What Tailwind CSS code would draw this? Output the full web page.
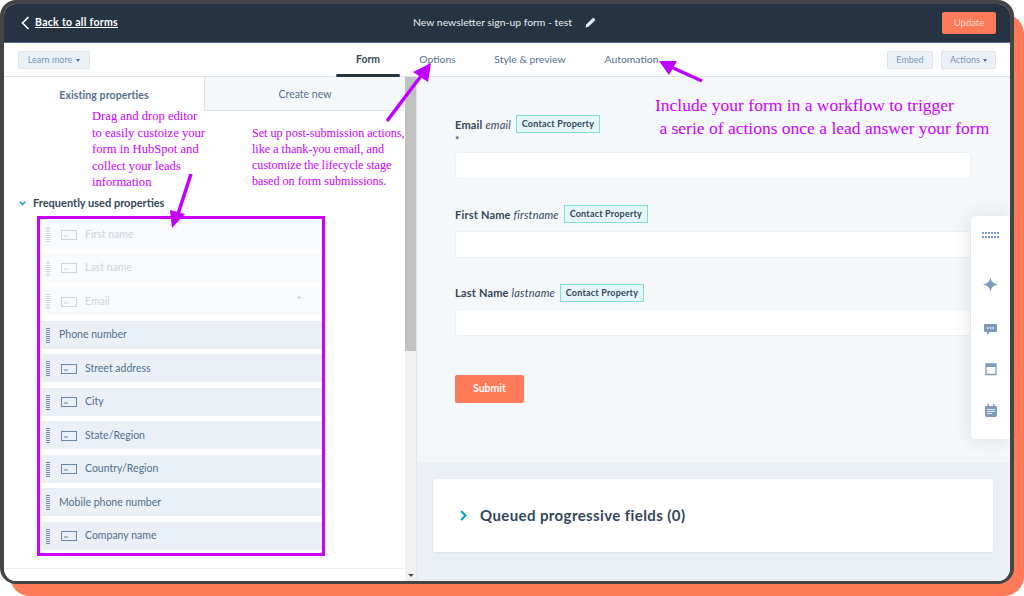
<!DOCTYPE html>
<html>
<head>
<meta charset="utf-8">
<script src="https://cdn.jsdelivr.net/npm/@tailwindcss/browser@4"></script>
</head>
<body class="bg-white">
<div class="relative w-[1024px] h-[596px] overflow-hidden bg-white font-['Lato','Noto_Sans',sans-serif] text-[#33475b]">
  <div class="absolute left-[10px] top-[14px] right-0 bottom-0 rounded-[20px] bg-[#ff7a59]"></div>
  <div class="relative w-[1014px] h-[584px] border-4 border-b-[3px] border-[#444444] rounded-[16px] overflow-hidden flex flex-col bg-white">
    <header class="h-[39px] shrink-0 bg-[#253342] flex items-center justify-between text-white pl-[17px] pr-[14px] border-b border-[#516f90]">
      <div class="flex items-center gap-[5px] w-[330px]">
        <svg width="9" height="14" viewBox="0 0 9 14" fill="none" stroke="#fff" stroke-width="1.6"><path d="M7.5 1 1.5 7l6 6"/></svg>
        <a class="text-[10.5px] font-bold underline tracking-[0.3px]">Back to all forms</a>
      </div>
      <div class="flex items-center gap-[13px] text-[10.4px] mr-[8px] text-[#e8edf2]">
        <span>New newsletter sign-up form - test</span>
        <svg width="11" height="11" viewBox="0 0 11 11" fill="#e8edf2"><path d="M0.5 10.5 1.2 7.6 7.6 1.2a1 1 0 0 1 1.4 0l1 1a1 1 0 0 1 0 1.4L3.4 9.8z"/></svg>
      </div>
      <div class="w-[330px] flex justify-end">
        <button class="w-[54px] h-[22px] bg-[#ff7a59] rounded-[2px] text-[9.5px] text-[#ffdcd0]">Update</button>
      </div>
    </header>
    <nav class="h-[34px] shrink-0 bg-white border-b border-[#dfe3eb] flex items-center justify-between px-[14px] relative">
      <button class="h-[18px] w-[72px] pt-[1px] bg-[#eaf0f6] border border-[#dfe3eb] rounded-[2px] text-[9px] text-[#7c98b6] flex items-center justify-center gap-[4px]">Learn more <span class="w-0 h-0 border-x-[2.5px] border-x-transparent border-t-[3px] border-t-[#516f90]"></span></button>
      <div class="absolute left-[332px] top-0 h-full pt-[1px] flex text-[10.4px] text-[#516f90]">
        <div class="w-[64px] flex items-center justify-center font-bold text-[#33475b] relative">Form<span class="absolute left-0 right-0 bottom-[-1px] h-[3px] rounded-[2px] bg-[#253342]"></span></div>
        <div class="w-[75px] flex items-center justify-center">Options</div>
        <div class="w-[110px] flex items-center justify-center">Style &amp; preview</div>
        <div class="w-[90px] flex items-center justify-center pl-[3px]">Automation</div>
      </div>
      <div class="flex gap-[8px]">
        <button class="h-[18px] w-[46px] pt-[1px] bg-[#eaf0f6] border border-[#dfe3eb] rounded-[2px] text-[9px] text-[#7c98b6]">Embed</button>
        <button class="h-[18px] w-[55px] pt-[1px] bg-[#eaf0f6] border border-[#dfe3eb] rounded-[2px] text-[9px] text-[#7c98b6] flex items-center justify-center gap-[3px]">Actions <span class="w-0 h-0 border-x-[2.5px] border-x-transparent border-t-[3px] border-t-[#516f90]"></span></button>
      </div>
    </nav>
    <div class="flex-1 flex min-h-0">
      <aside class="w-[401px] shrink-0 bg-white flex flex-col">
        <div class="flex h-[34px] text-[10.5px] shrink-0">
          <div class="w-[200px] pt-[3px] flex items-center justify-center font-bold tracking-[0.1px] text-[#516f90]">Existing properties</div>
          <div class="w-[201px] pt-[3px] flex items-center justify-center bg-[#f5f8fa] border-b border-l border-[#dfe3eb] text-[#516f90]">Create new</div>
        </div>
        <div class="mt-[84px] ml-[15px] flex items-center gap-[7px] text-[11px] font-bold text-[#33475b] h-[16px]">
          <svg width="7" height="5" viewBox="0 0 7 5" fill="none" stroke="#00a4bd" stroke-width="1.4"><path d="M.7.8 3.5 3.6 6.3.8"/></svg>
          <span>Frequently used properties</span>
        </div>
        <ul class="ml-[33px] mt-[5px] w-[288px] h-[340px] border-[3px] border-[#cc00ff] pt-[1px] flex flex-col gap-[5.5px]">
          <li class="h-[28px] pt-[1px] bg-[#f5f8fa]/70 flex items-center pl-[6px] text-[10.5px] text-[#cbd6e2]"><span class="w-[4px] h-[15px] mr-[11px] bg-[repeating-linear-gradient(to_bottom,#cbd6e2_0,#cbd6e2_1px,transparent_1px,transparent_2px)]"></span><svg class="mr-[8px]" width="16" height="10" viewBox="0 0 16 10" fill="none" stroke="#cbd6e2"><rect x=".5" y=".5" width="15" height="9"/><path d="M3 6h4"/></svg>First name</li>
          <li class="h-[28px] pt-[1px] bg-[#f5f8fa]/70 flex items-center pl-[6px] text-[10.5px] text-[#cbd6e2]"><span class="w-[4px] h-[15px] mr-[11px] bg-[repeating-linear-gradient(to_bottom,#cbd6e2_0,#cbd6e2_1px,transparent_1px,transparent_2px)]"></span><svg class="mr-[8px]" width="16" height="10" viewBox="0 0 16 10" fill="none" stroke="#cbd6e2"><rect x=".5" y=".5" width="15" height="9"/><path d="M3 6h4"/></svg>Last name</li>
          <li class="h-[28px] pt-[1px] bg-[#f5f8fa]/70 flex items-center pl-[6px] text-[10.5px] text-[#cbd6e2] relative"><span class="w-[4px] h-[15px] mr-[11px] bg-[repeating-linear-gradient(to_bottom,#cbd6e2_0,#cbd6e2_1px,transparent_1px,transparent_2px)]"></span><svg class="mr-[8px]" width="16" height="10" viewBox="0 0 16 10" fill="none" stroke="#cbd6e2"><rect x=".5" y=".5" width="15" height="9"/><path d="M3 6h4"/></svg>Email<span class="absolute right-[21px] top-[6px] text-[9px] text-[#99acc2]">*</span></li>
          <li class="h-[28px] pt-[1px] bg-[#eaf0f6] flex items-center pl-[6px] text-[10.5px] text-[#516f90]"><span class="w-[4px] h-[15px] mr-[9px] bg-[repeating-linear-gradient(to_bottom,#6b87a5_0,#6b87a5_1px,transparent_1px,transparent_2px)]"></span>Phone number</li>
          <li class="h-[28px] pt-[1px] bg-[#eaf0f6] flex items-center pl-[6px] text-[10.5px] text-[#516f90]"><span class="w-[4px] h-[15px] mr-[11px] bg-[repeating-linear-gradient(to_bottom,#6b87a5_0,#6b87a5_1px,transparent_1px,transparent_2px)]"></span><svg class="mr-[8px]" width="16" height="10" viewBox="0 0 16 10" fill="none" stroke="#6b87a5"><rect x=".5" y=".5" width="15" height="9"/><path d="M3 6h4"/></svg>Street address</li>
          <li class="h-[28px] pt-[1px] bg-[#eaf0f6] flex items-center pl-[6px] text-[10.5px] text-[#516f90]"><span class="w-[4px] h-[15px] mr-[11px] bg-[repeating-linear-gradient(to_bottom,#6b87a5_0,#6b87a5_1px,transparent_1px,transparent_2px)]"></span><svg class="mr-[8px]" width="16" height="10" viewBox="0 0 16 10" fill="none" stroke="#6b87a5"><rect x=".5" y=".5" width="15" height="9"/><path d="M3 6h4"/></svg>City</li>
          <li class="h-[28px] pt-[1px] bg-[#eaf0f6] flex items-center pl-[6px] text-[10.5px] text-[#516f90]"><span class="w-[4px] h-[15px] mr-[11px] bg-[repeating-linear-gradient(to_bottom,#6b87a5_0,#6b87a5_1px,transparent_1px,transparent_2px)]"></span><svg class="mr-[8px]" width="16" height="10" viewBox="0 0 16 10" fill="none" stroke="#6b87a5"><rect x=".5" y=".5" width="15" height="9"/><path d="M3 6h4"/></svg>State/Region</li>
          <li class="h-[28px] pt-[1px] bg-[#eaf0f6] flex items-center pl-[6px] text-[10.5px] text-[#516f90]"><span class="w-[4px] h-[15px] mr-[11px] bg-[repeating-linear-gradient(to_bottom,#6b87a5_0,#6b87a5_1px,transparent_1px,transparent_2px)]"></span><svg class="mr-[8px]" width="16" height="10" viewBox="0 0 16 10" fill="none" stroke="#6b87a5"><rect x=".5" y=".5" width="15" height="9"/><path d="M3 6h4"/></svg>Country/Region</li>
          <li class="h-[28px] pt-[1px] bg-[#eaf0f6] flex items-center pl-[6px] text-[10.5px] text-[#516f90]"><span class="w-[4px] h-[15px] mr-[9px] bg-[repeating-linear-gradient(to_bottom,#6b87a5_0,#6b87a5_1px,transparent_1px,transparent_2px)]"></span>Mobile phone number</li>
          <li class="h-[28px] pt-[1px] bg-[#eaf0f6] flex items-center pl-[6px] text-[10.5px] text-[#516f90]"><span class="w-[4px] h-[15px] mr-[11px] bg-[repeating-linear-gradient(to_bottom,#6b87a5_0,#6b87a5_1px,transparent_1px,transparent_2px)]"></span><svg class="mr-[8px]" width="16" height="10" viewBox="0 0 16 10" fill="none" stroke="#6b87a5"><rect x=".5" y=".5" width="15" height="9"/><path d="M3 6h4"/></svg>Company name</li>
        </ul>
        <div class="mt-[12px] border-t border-[#eaf0f6]"></div>
      </aside>
      <div class="w-[12px] shrink-0 bg-[#f1f1f1] flex flex-col border-r border-[#e5e5e5]">
        <div class="h-[274px] bg-[#c1c1c1]"></div>
        <div class="flex-1 flex items-end justify-center pb-[4px]"><span class="w-0 h-0 border-x-[3px] border-x-transparent border-t-[3px] border-t-[#505050]"></span></div>
      </div>
      <main class="flex-1 flex flex-col min-w-0 relative">
        <section class="h-[385px] shrink-0 bg-[#f5f8fa] pl-[38px] pr-[39px] pt-[38px]">
          <div class="flex items-center gap-[4px] h-[18px] text-[11px] tracking-[0.2px] font-bold text-[#33475b]">
            <span class="pt-[2px]">Email <i class="font-normal">email</i></span>
            <span class="ml-[1px] -mt-[1px] h-[18px] w-[84px] flex items-center justify-center bg-[#e5f5f8] border border-[#7fded1] text-[9px] tracking-[0.2px] font-bold">Contact Property</span>
          </div>
          <div class="h-[9px] text-[10px] leading-[12px] font-bold">*</div>
          <div class="mt-[10px] h-[27px] bg-white border border-[#eaf0f6] rounded-[3px]"></div>
          <div class="mt-[26px] flex items-center gap-[4px] h-[18px] text-[11px] tracking-[0.2px] font-bold text-[#33475b]">
            <span class="pt-[2px]">First Name <i class="font-normal">firstname</i></span>
            <span class="ml-[1px] -mt-[1px] h-[18px] w-[84px] flex items-center justify-center bg-[#e5f5f8] border border-[#7fded1] text-[9px] tracking-[0.2px] font-bold">Contact Property</span>
          </div>
          <div class="mt-[8px] h-[27px] bg-white border border-[#eaf0f6] rounded-[3px]"></div>
          <div class="mt-[26px] flex items-center gap-[4px] h-[18px] text-[11px] tracking-[0.2px] font-bold text-[#33475b]">
            <span>Last Name <i class="font-normal">lastname</i></span>
            <span class="ml-[1px] h-[18px] w-[84px] flex items-center justify-center bg-[#e5f5f8] border border-[#7fded1] text-[9px] tracking-[0.2px] font-bold">Contact Property</span>
          </div>
          <div class="mt-[7px] h-[27px] bg-white border border-[#eaf0f6] rounded-[3px]"></div>
          <button class="mt-[39px] w-[69px] h-[28px] bg-[#ff7a59] rounded-[2px] text-white text-[10.5px] font-bold">Submit</button>
        </section>
        <section class="flex-1 bg-[#eaf0f6] pl-[16px] pr-[17px] pt-[17px]">
          <div class="h-[73px] bg-white rounded-[2px] shadow-[0_1px_2px_rgba(0,0,0,0.08)] flex items-center pl-[27px] gap-[13px] text-[15px] tracking-[0.4px] font-bold text-[#33475b]">
            <svg width="7" height="11" viewBox="0 0 7 11" fill="none" stroke="#00a4bd" stroke-width="2"><path d="M1 1l4.5 4.5L1 10"/></svg>
            <span>Queued progressive fields (0)</span>
          </div>
        </section>
        <div class="absolute right-0 top-[139px] w-[39px] h-[223px] bg-white rounded-l-[5px] shadow-[0_0_18px_rgba(45,62,80,0.14)] flex flex-col items-center">
          <svg class="mt-[16px]" width="17" height="7" viewBox="0 0 17 7" fill="#7b9bbf"><path d="M0 0h2v2H0zM3 0h2v2H3zM6 0h2v2H6zM9 0h2v2H9zM12 0h2v2h-2zM15 0h2v2h-2zM0 4h2v2H0zM3 4h2v2H3zM6 4h2v2H6zM9 4h2v2H9zM12 4h2v2h-2zM15 4h2v2h-2z"/></svg>
          <svg class="mt-[38px]" width="15" height="15" viewBox="0 0 16 16" fill="#7b9bbf"><path d="M8 0c.8 4.8 2.600 6.900 8 8-5.400 1.100-7.200 3.200-8 8-.8-4.800-2.600-6.900-8-8C5.400 6.900 7.200 4.800 8 0z"/></svg>
          <svg class="mt-[31px]" width="13" height="13" viewBox="0 0 13 13" fill="#7b9bbf"><path d="M1 1h11a1 1 0 0 1 1 1v6a1 1 0 0 1-1 1H6l-3 3V9H1a1 1 0 0 1-1-1V2a1 1 0 0 1 1-1z"/><path fill="#fff" d="M3 4.300h1.500v1.500H3zM5.800 4.300h1.500v1.500H5.800zM8.500 4.300H10v1.500H8.500z"/></svg>
          <svg class="mt-[27px]" width="12" height="13" viewBox="0 0 12 13" fill="none" stroke="#7b9bbf" stroke-width="1.300"><path d="M1 1h10v10.500H1z"/><path d="M1 2.500h10" stroke-width="3"/></svg>
          <svg class="mt-[28px]" width="12" height="13" viewBox="0 0 12 13" fill="#7b9bbf"><path d="M2.500 0h1.500v2h4V0h1.500v2H11a1 1 0 0 1 1 1v8a2 2 0 0 1-2 2H2a2 2 0 0 1-2-2V3a1 1 0 0 1 1-1h1.500z"/><path fill="#fff" d="M2 5h8v.8H2zM2 7h8v.8H2zM2 9h5v.8H2z"/></svg>
        </div>
      </main>
    </div>
  </div>

  <div class="absolute left-[92px] top-[108px] w-[125px] font-['Liberation_Serif',serif] text-[12.6px] leading-[16.5px] text-[#cc00ff]">Drag and drop editor<br>to easily custoize your<br>form in HubSpot and<br>collect your leads<br>information</div>
  <div class="absolute left-[252px] top-[125px] w-[165px] font-['Liberation_Serif',serif] text-[12.1px] leading-[16px] text-[#cc00ff] whitespace-nowrap">Set up post-submission actions,<br>like a thank-you email, and<br>customize the lifecycle stage<br>based on form submissions.</div>
  <div class="absolute left-[655px] top-[94px] font-['Liberation_Serif',serif] text-[17.5px] leading-[23px] text-[#cc00ff] whitespace-pre">Include your form in a workflow to trigger
 a serie of actions once a lead answer your form</div>

  <svg class="absolute left-0 top-0 pointer-events-none" width="1024" height="596" fill="#bf00ff" stroke="none">
    <path d="M387 121 421 76" stroke="#bf00ff" stroke-width="3.5" fill="none"/>
    <path d="M431 63 413 72 428 82z"/>
    <path d="M702 81 671 67" stroke="#bf00ff" stroke-width="3.5" fill="none"/>
    <path d="M659 61 677 61 669 75z"/>
    <path d="M191 174 178 214" stroke="#bf00ff" stroke-width="3.5" fill="none"/>
    <path d="M172 228 170 210 185 214z"/>
  </svg>
</div>
</body>
</html>
